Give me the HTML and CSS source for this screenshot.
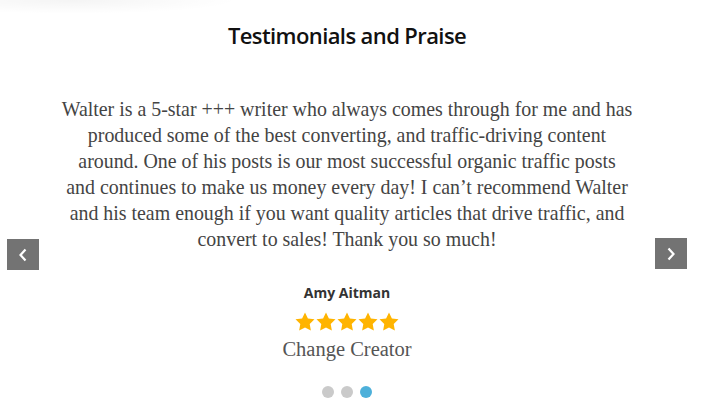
FILE: index.html
```html
<!DOCTYPE html>
<html lang="en">
<head>
<meta charset="utf-8">
<title>Testimonials and Praise</title>
<link rel="stylesheet" href="styles.css">
</head>
<body>
<div class="shade"></div>
<section class="testimonials">
  <h2 class="title">Testimonials and Praise</h2>
  <div class="slider">
    <button class="arrow arrow-prev" aria-label="Previous">
      <svg width="10" height="14" viewBox="0 0 10 14"><path d="M7.5 1.5 L2.5 7 L7.5 12.5" fill="none" stroke="#fff" stroke-width="2.2"/></svg>
    </button>
    <div class="slide">
      <p class="quote">Walter is a 5-star +++ writer who always comes through for me and has<br>produced some of the best converting, and traffic-driving content<br>around. One of his posts is our most successful organic traffic posts<br>and continues to make us money every day! I can’t recommend Walter<br>and his team enough if you want quality articles that drive traffic, and<br>convert to sales! Thank you so much!</p>
      <div class="name">Amy Aitman</div>
      <div class="stars">
        <svg width="20" height="19" viewBox="0 0 24 23"><path d="M12 0.5l3.5 7.3 8 1.1-5.8 5.6 1.4 8-7.1-3.8-7.1 3.8 1.4-8L0.5 8.9l8-1.1z" fill="#ffb400"/></svg>
        <svg width="20" height="19" viewBox="0 0 24 23"><path d="M12 0.5l3.5 7.3 8 1.1-5.8 5.6 1.4 8-7.1-3.8-7.1 3.8 1.4-8L0.5 8.9l8-1.1z" fill="#ffb400"/></svg>
        <svg width="20" height="19" viewBox="0 0 24 23"><path d="M12 0.5l3.5 7.3 8 1.1-5.8 5.6 1.4 8-7.1-3.8-7.1 3.8 1.4-8L0.5 8.9l8-1.1z" fill="#ffb400"/></svg>
        <svg width="20" height="19" viewBox="0 0 24 23"><path d="M12 0.5l3.5 7.3 8 1.1-5.8 5.6 1.4 8-7.1-3.8-7.1 3.8 1.4-8L0.5 8.9l8-1.1z" fill="#ffb400"/></svg>
        <svg width="20" height="19" viewBox="0 0 24 23"><path d="M12 0.5l3.5 7.3 8 1.1-5.8 5.6 1.4 8-7.1-3.8-7.1 3.8 1.4-8L0.5 8.9l8-1.1z" fill="#ffb400"/></svg>
      </div>
      <div class="company">Change Creator</div>
    </div>
    <button class="arrow arrow-next" aria-label="Next">
      <svg width="10" height="14" viewBox="0 0 10 14"><path d="M2.5 1.5 L7.5 7 L2.5 12.5" fill="none" stroke="#fff" stroke-width="2.2"/></svg>
    </button>
  </div>
  <div class="dots">
    <span class="dot"></span>
    <span class="dot"></span>
    <span class="dot active"></span>
  </div>
</section>
</body>
</html>
```
FILE: styles.css
```css
html, body {
  margin: 0;
  padding: 0;
  background: #fff;
}
body {
  width: 727px;
  height: 418px;
  overflow: hidden;
  position: relative;
}
.shade {
  position: absolute;
  left: 0;
  top: 0;
  width: 240px;
  height: 14px;
  background: radial-gradient(ellipse at 30% 0%, rgba(0,0,0,0.045), rgba(0,0,0,0) 70%);
}
.testimonials {
  width: 694px;
  padding-top: 20px;
}
.title {
  margin: 0;
  text-align: center;
  font-family: "Open Sans", sans-serif;
  font-weight: 600;
  font-size: 22px;
  letter-spacing: -0.6px;
  line-height: 30px;
  color: #111;
}
.slider {
  display: flex;
  align-items: flex-start;
  justify-content: space-between;
  margin-top: 46px;
  padding: 0 7px;
}
.arrow {
  flex: none;
  width: 32px;
  height: 31px;
  margin-top: 143px;
  border: 0;
  padding: 0;
  background: #737373;
  display: flex;
  align-items: center;
  justify-content: center;
  cursor: pointer;
}
.arrow-next {
  margin-top: 142px;
}
.slide {
  flex: 1;
  text-align: center;
}
.quote {
  margin: 0;
  font-family: "Liberation Serif", serif;
  font-size: 19.9px;
  line-height: 26px;
  color: #444;
}
.name {
  margin-top: 31px;
  font-family: "Open Sans", sans-serif;
  font-weight: 700;
  font-size: 14px;
  line-height: 20px;
  color: #333;
}
.stars {
  display: flex;
  justify-content: center;
  gap: 1px;
  margin-top: 9px;
  height: 19px;
}
.company {
  margin-top: 5px;
  font-family: "Liberation Serif", serif;
  font-size: 20.5px;
  line-height: 26px;
  color: #555;
}
.dots {
  display: flex;
  justify-content: center;
  gap: 7px;
  margin-top: 24px;
}
.dot {
  width: 12px;
  height: 12px;
  border-radius: 50%;
  background: #cacaca;
}
.dot.active {
  background: #4db0da;
}
```
